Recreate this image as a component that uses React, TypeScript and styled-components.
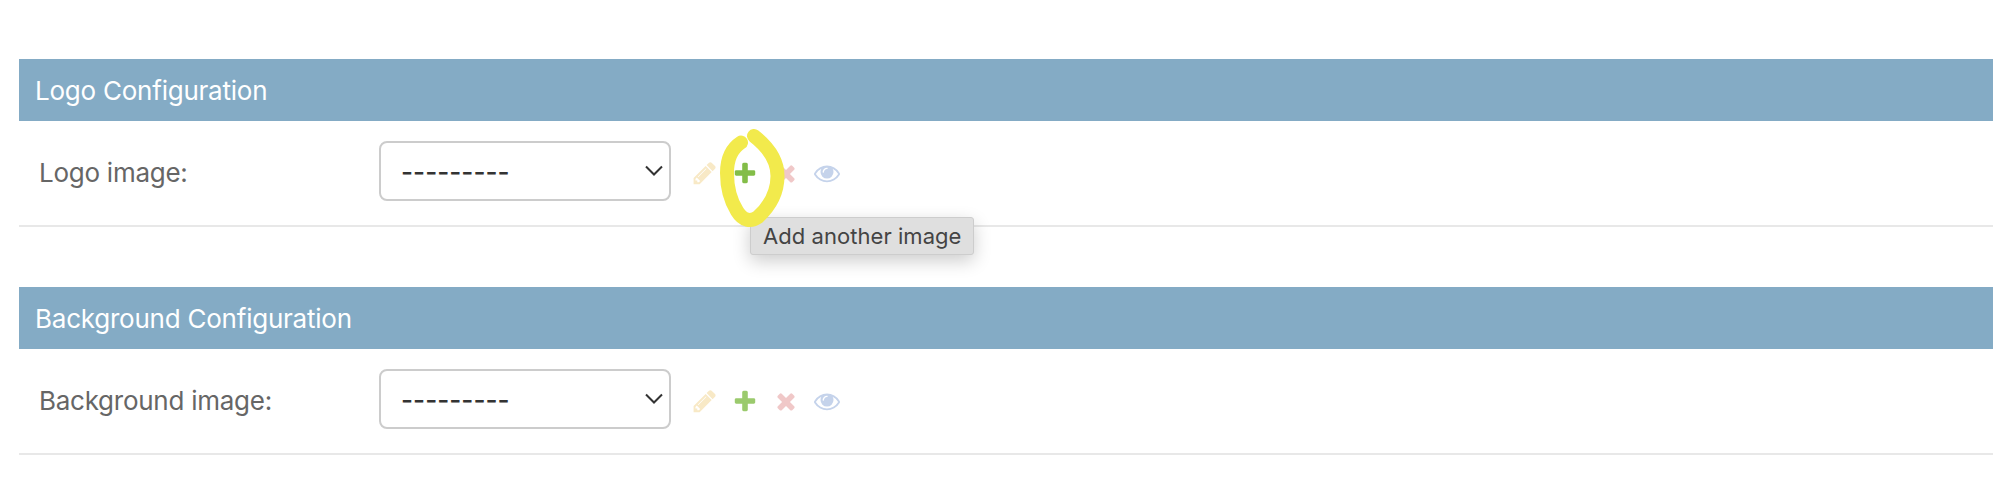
import React from "react";
import styled, { createGlobalStyle } from "styled-components";

const GlobalStyle = createGlobalStyle`
  body { margin: 0; background: #fff; font-family: Inter, "Liberation Sans", sans-serif; }
  * { box-sizing: border-box; }
`;

const Page = styled.main`
  width: 100%;
  height: 487px;
  padding: 59px 21px 0 19px;
  display: flex;
  flex-direction: column;
  gap: 60px;
`;

const Fieldset = styled.section`
  display: flex;
  flex-direction: column;
`;

const Heading = styled.h2`
  margin: 0;
  height: 62px;
  padding-left: 16px;
  background: #84abc5;
  color: #fff;
  font-size: 26px;
  font-weight: 400;
  letter-spacing: -0.23px;
  line-height: 63px;
  white-space: nowrap;
`;

const FormRow = styled.div`
  height: 106px;
  padding: 20px 0 0 20px;
  display: flex;
  align-items: flex-start;
  border-bottom: 2px solid #e8e8e8;
`;

const Label = styled.label`
  width: 340px;
  color: #666;
  font-size: 26px;
  letter-spacing: -0.26px;
  line-height: 64px;
  height: 64px;
  white-space: nowrap;
`;

const SelectBox = styled.button`
  width: 292px;
  height: 60px;
  padding: 0 6px 0 20px;
  display: flex;
  align-items: center;
  justify-content: space-between;
  border: 2px solid #ccc;
  border-radius: 8px;
  background: #fff;
  color: #333;
  font: 500 26px Inter, sans-serif;
`;

const Value = styled.span`
  padding-top: 2px;
  letter-spacing: 0.05px;
  line-height: 54px;
`;

const Actions = styled.div`
  margin: 19px 0 0 20px;
  display: flex;
  gap: 15px;
`;

const Action = styled.span`
  position: relative;
  width: 26px;
  height: 26px;
`;

const Glyph = styled.svg`
  display: block;
`;

const Marker = styled.svg`
  position: absolute;
  z-index: 2;
  left: -17px;
  top: -36px;
  pointer-events: none;
`;

const Tooltip = styled.span`
  position: absolute;
  z-index: 1;
  left: 18px;
  top: 57px;
  width: 224px;
  height: 38px;
  padding-left: 12px;
  border: 1px solid #cdcdcd;
  border-radius: 3px;
  background: #dfdfdf;
  box-shadow: 0 6px 18px rgba(0, 0, 0, 0.2);
  color: #444;
  font-size: 22px;
  letter-spacing: 0.05px;
  line-height: 37px;
  white-space: nowrap;
`;

const paths = {
  pencil: "M491 1536l91-91-235-235-91 91v107h128v128h107zm523-928q0-22-22-22-10 0-17 7l-542 542q-7 7-7 17 0 22 22 22 10 0 17-7l542-542q7-7 7-17zm-54-192l416 416-832 832h-416v-416zm683 96q0 53-37 90l-166 166-416-416 166-165q36-38 90-38 53 0 91 38l235 234q37 39 37 91z",
  plus: "M1600 796v192q0 40-28 68t-68 28h-416v416q0 40-28 68t-68 28h-192q-40 0-68-28t-28-68v-416h-416q-40 0-68-28t-28-68v-192q0-40 28-68t68-28h416v-416q0-40 28-68t68-28h192q40 0 68 28t28 68v416h416q40 0 68 28t28 68z",
  cross: "M1490 1322q0 40-28 68l-136 136q-28 28-68 28t-68-28l-294-294-294 294q-28 28-68 28t-68-28l-136-136q-28-28-28-68t28-68l294-294-294-294q-28-28-28-68t28-68l136-136q28-28 68-28t68 28l294 294 294-294q28-28 68-28t68 28l136 136q28 28 28 68t-28 68l-294 294 294 294q28 28 28 68z",
  eye: "M1664 960q-152-236-381-353 61 104 61 225 0 185-131.5 316.5t-316.5 131.5-316.5-131.5-131.5-316.5q0-121 61-225-229 117-381 353 133 205 333.5 326.5t434.5 121.5 434.5-121.5 333.5-326.5zm-720-384q0-20-14-34t-34-14q-125 0-214.5 89.5t-89.5 214.5q0 20 14 34t34 14 34-14 14-34q0-86 61-147t147-61q20 0 34-14t14-34zm848 384q0 34-20 69-140 230-376.5 368.5t-499.5 138.5-499.5-139-376.5-368q-20-35-20-69t20-69q140-229 376.5-368t499.5-139 499.5 139 376.5 368q20 35 20 69z",
};

function Icon({ name, color }: { name: keyof typeof paths; color: string }) {
  return (
    <Glyph width="26" height="26" viewBox={name === "pencil" ? "-50 0 1792 1792" : "0 0 1792 1792"}>
      <path fill={color} d={paths[name]} />
    </Glyph>
  );
}

function ImageField({ title, label, active }: { title: string; label: string; active?: boolean }) {
  return (
    <Fieldset>
      <Heading>{title}</Heading>
      <FormRow>
        <Label>{label}</Label>
        <SelectBox>
          <Value>---------</Value>
          <svg width="18" height="12" viewBox="0 0 18 12" fill="none" stroke="#333" strokeWidth="2">
            <path d="M1 1.5 9 9.5 17 1.5" />
          </svg>
        </SelectBox>
        <Actions>
          <Action><Icon name="pencil" color="#f8e9c6" /></Action>
          <Action>
            <Icon name="plus" color={active ? "#83bd48" : "#9bca6d"} />
            {active && (
              <>
                <Tooltip>Add another image</Tooltip>
                <Marker width="74" height="104" viewBox="715 124 74 104">
                  <path
                    d="M741 142.5C731 149 727 161 727 173C727 190 732 203 737 211C743 221 751 222 758 217C771 205 777.5 190 777.5 176C777.5 160 768 147 754 136"
                    fill="none" stroke="#f2ea4c" strokeWidth="14" strokeLinecap="round"
                  />
                </Marker>
              </>
            )}
          </Action>
          <Action><Icon name="cross" color="#f0c8c8" /></Action>
          <Action><Icon name="eye" color="#c5d3eb" /></Action>
        </Actions>
      </FormRow>
    </Fieldset>
  );
}

export default function App() {
  return (
    <>
      <GlobalStyle />
      <Page>
        <ImageField title="Logo Configuration" label="Logo image:" active />
        <ImageField title="Background Configuration" label="Background image:" />
      </Page>
    </>
  );
}
